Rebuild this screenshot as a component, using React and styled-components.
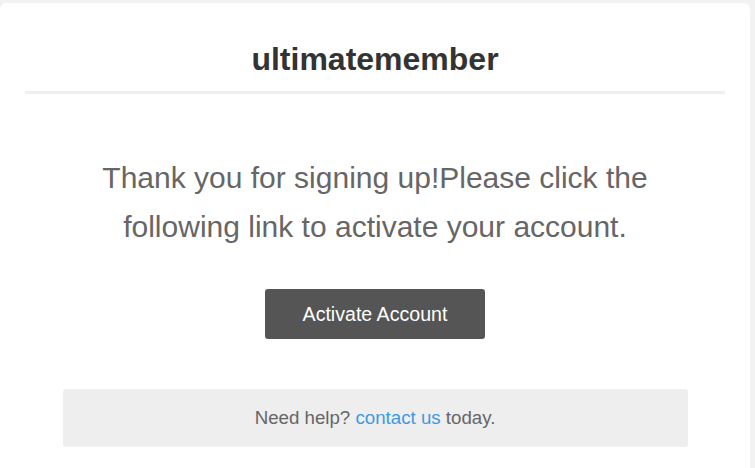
import React from 'react';
import styled, { createGlobalStyle } from 'styled-components';

const GlobalStyle = createGlobalStyle`
  body {
    margin: 0;
    background: #f2f2f2;
    font-family: 'Liberation Sans', Arial, sans-serif;
  }
`;

const Page = styled.div`
  padding-top: 3px;
  width: 750px;
`;

const Card = styled.div`
  background: #fff;
  border-radius: 6px;
  min-height: 480px;
  padding: 0 25px;
  box-sizing: border-box;
`;

const Header = styled.div`
  border-bottom: 3px solid #efefef;
  padding: 38px 0 14px;
  text-align: center;
`;

const Brand = styled.h1`
  margin: 0;
  font-size: 32px;
  line-height: 36px;
  font-weight: bold;
  color: #333;
`;

const Body = styled.div`
  display: flex;
  flex-direction: column;
  align-items: center;
  padding-top: 59px;
`;

const Message = styled.p`
  margin: 0;
  width: 600px;
  text-align: center;
  font-size: 30px;
  line-height: 49px;
  color: #666;
`;

const ActionButton = styled.a`
  display: flex;
  align-items: center;
  justify-content: center;
  width: 220px;
  height: 50px;
  margin-top: 38px;
  background: #555;
  border-radius: 3px;
  color: #fff;
  font-size: 19.6px;
  text-decoration: none;
`;

const HelpBox = styled.div`
  width: 625px;
  height: 58px;
  margin-top: 50px;
  background: #eee;
  border-radius: 3px;
  display: flex;
  align-items: center;
  justify-content: center;
  font-size: 18.7px;
  color: #666;
  white-space: pre;
`;

const HelpLink = styled.a`
  color: #3d9ae0;
  text-decoration: none;
`;

export default function App() {
  return (
    <>
      <GlobalStyle />
      <Page>
        <Card>
          <Header>
            <Brand>ultimatemember</Brand>
          </Header>
          <Body>
            <Message>
              Thank you for signing up!Please click the following link to activate your account.
            </Message>
            <ActionButton href="#">Activate Account</ActionButton>
            <HelpBox>
              Need help? <HelpLink href="#">contact us</HelpLink> today.
            </HelpBox>
          </Body>
        </Card>
      </Page>
    </>
  );
}
